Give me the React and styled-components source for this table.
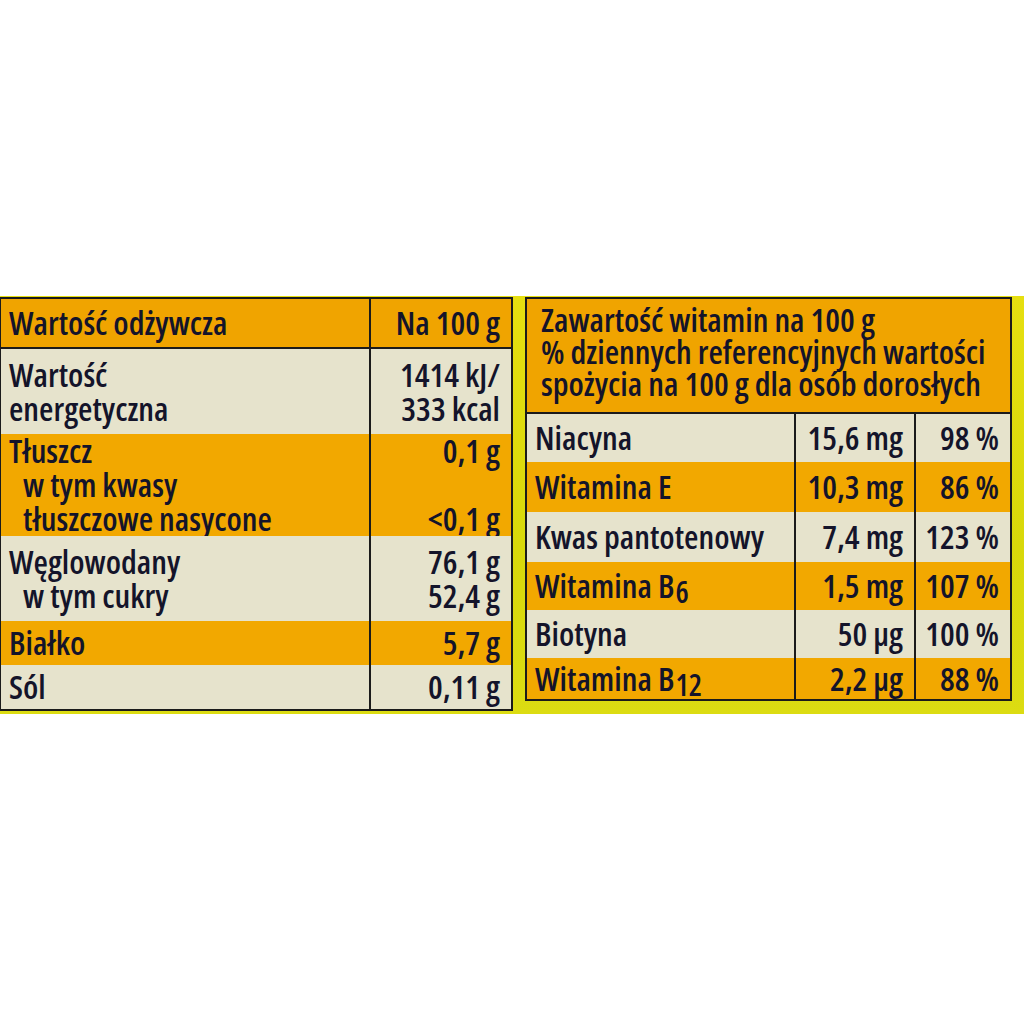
import React from "react";
import styled, { createGlobalStyle } from "styled-components";

const Global = createGlobalStyle`
  html, body { margin: 0; padding: 0; background: #ffffff; }
  body { font-family: "Open Sans", "Liberation Sans", sans-serif; }
`;

const Page = styled.div`
  width: 1024px;
  height: 1024px;
  padding-top: 296px;
  box-sizing: border-box;
  background: #ffffff;
`;

const Band = styled.div`
  height: 418px;
  background: linear-gradient(180deg, #e6df10 0%, #d8d80a 60%, #dcdc12 100%);
  display: flex;
  align-items: flex-start;
  gap: 12px;
  padding: 1px 12px 0 0;
  box-sizing: border-box;
  font-family: "Open Sans", "Liberation Sans", sans-serif;
  font-stretch: 75%;
  font-weight: 600;
  color: #14142a;
`;

const LeftTable = styled.div`
  width: 513px;
  display: grid;
  grid-template-columns: 368px 1fr;
  border: 2px solid #1b1b1b;
  border-left-width: 1px;
  box-sizing: border-box;
`;

const RightTable = styled.div`
  flex: 1;
  display: grid;
  grid-template-columns: 267px 120px 1fr;
  border: 2px solid #1b1b1b;
  box-sizing: border-box;
`;

const tones = {
  head: "#f0a400",
  orange: "#f2a800",
  light: "#e6e3cc",
};

const Cell = styled.div`
  background: ${(p) => tones[p.$tone]};
  height: ${(p) => p.$h}px;
  box-sizing: border-box;
  padding: ${(p) => (p.$right ? "0 11px 0 4px" : "0 8px 0 8px")};
  display: flex;
  flex-direction: column;
  justify-content: center;
  align-items: ${(p) => (p.$right ? "flex-end" : "flex-start")};
  border-left: ${(p) => (p.$divider ? "2px solid #1b1b1b" : "none")};
  border-bottom: ${(p) => (p.$rule ? "2px solid #1b1b1b" : "none")};
  font-size: 33px;
  line-height: 34px;
  white-space: nowrap;
`;

const Line = styled.span`
  display: block;
  height: 34px;
  padding-left: ${(p) => (p.$indent ? "14px" : "0")};
`;

const HeadCell = styled.div`
  grid-column: 1 / -1;
  background: ${tones.head};
  height: 115px;
  box-sizing: border-box;
  border-bottom: 2px solid #1b1b1b;
  padding: 5px 14px 0 14px;
  font-size: 33px;
  line-height: 32px;
  white-space: nowrap;
`;

const HeadLine = styled.span`
  display: block;
  height: 32px;
`;

const Sub = styled.span`
  font-size: 0.9em;
  position: relative;
  top: 0.18em;
  margin-left: 1px;
`;

const leftRows = [
  { tone: "light", h: 85, label: [["Wartość"], ["energetyczna"]], value: ["1414 kJ/", "333 kcal"] },
  {
    tone: "orange",
    h: 102,
    label: [["Tłuszcz"], ["w tym kwasy", true], ["tłuszczowe nasycone", true]],
    value: ["0,1 g", "", "<0,1 g"],
  },
  { tone: "light", h: 85, label: [["Węglowodany"], ["w tym cukry", true]], value: ["76,1 g", "52,4 g"] },
  { tone: "orange", h: 44, label: [["Białko"]], value: ["5,7 g"] },
  { tone: "light", h: 44, label: [["Sól"]], value: ["0,11 g"] },
];

const rightRows = [
  { tone: "light", h: 48, name: "Niacyna", amount: "15,6 mg", pct: "98 %" },
  { tone: "orange", h: 50, name: "Witamina E", amount: "10,3 mg", pct: "86 %" },
  { tone: "light", h: 50, name: "Kwas pantotenowy", amount: "7,4 mg", pct: "123 %" },
  { tone: "orange", h: 48, name: "Witamina B", sub: "6", amount: "1,5 mg", pct: "107 %" },
  { tone: "light", h: 48, name: "Biotyna", amount: "50 µg", pct: "100 %" },
  { tone: "orange", h: 41, name: "Witamina B", sub: "12", amount: "2,2 µg", pct: "88 %" },
];

export default function App() {
  return (
    <Page>
      <Global />
      <Band>
        <LeftTable>
          <Cell $tone="head" $h={50} $rule>
            <Line>Wartość odżywcza</Line>
          </Cell>
          <Cell $tone="head" $h={50} $rule $right $divider>
            <Line>Na 100 g</Line>
          </Cell>
          {leftRows.map((r, i) => (
            <React.Fragment key={i}>
              <Cell $tone={r.tone} $h={r.h}>
                {r.label.map(([t, ind], j) => (
                  <Line key={j} $indent={ind}>{t}</Line>
                ))}
              </Cell>
              <Cell $tone={r.tone} $h={r.h} $right $divider>
                {r.value.map((t, j) => (
                  <Line key={j}>{t}</Line>
                ))}
              </Cell>
            </React.Fragment>
          ))}
        </LeftTable>
        <RightTable>
          <HeadCell>
            <HeadLine>Zawartość witamin na 100 g</HeadLine>
            <HeadLine>% dziennych referencyjnych wartości</HeadLine>
            <HeadLine>spożycia na 100 g dla osób dorosłych</HeadLine>
          </HeadCell>
          {rightRows.map((r, i) => (
            <React.Fragment key={i}>
              <Cell $tone={r.tone} $h={r.h}>
                <Line>
                  {r.name}
                  {r.sub && <Sub>{r.sub}</Sub>}
                </Line>
              </Cell>
              <Cell $tone={r.tone} $h={r.h} $right $divider>
                <Line>{r.amount}</Line>
              </Cell>
              <Cell $tone={r.tone} $h={r.h} $right $divider>
                <Line>{r.pct}</Line>
              </Cell>
            </React.Fragment>
          ))}
        </RightTable>
      </Band>
    </Page>
  );
}
